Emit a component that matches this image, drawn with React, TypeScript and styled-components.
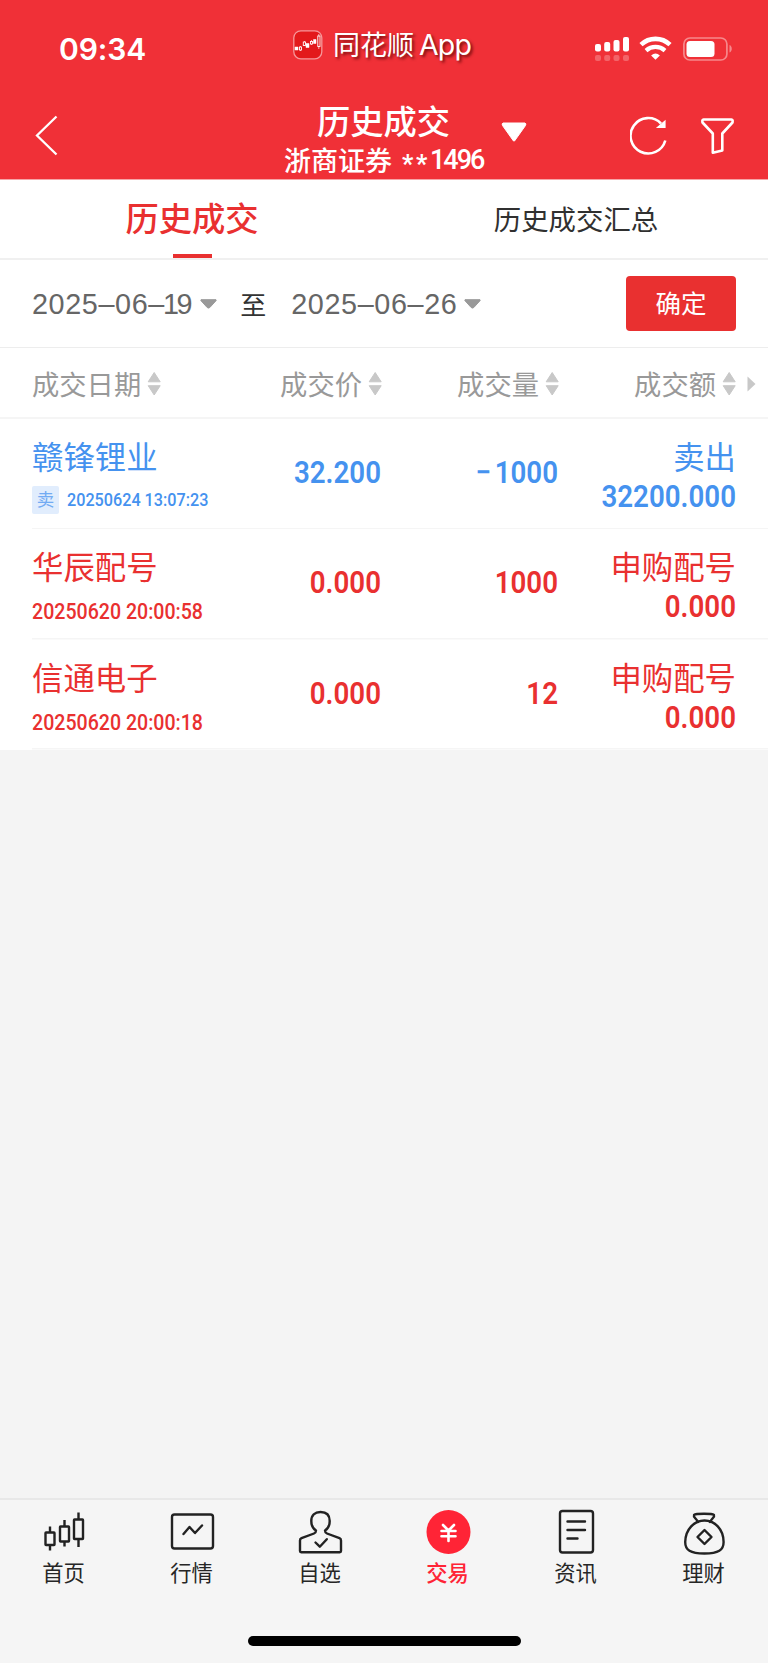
import React from "react";
import styled, { createGlobalStyle } from "styled-components";

const RED = "#e93030";
const BLUE = "#4592ef";

const GlobalStyle = createGlobalStyle`
  * { box-sizing: border-box; }
  body {
    margin: 0;
    background: #f5f5f5;
    font-family: "Noto Sans CJK SC", sans-serif;
  }
`;

const Page = styled.div`
  width: 768px;
  height: 1663px;
  display: flex;
  flex-direction: column;
  background: #f4f4f4;
  white-space: nowrap;
`;

const TopArea = styled.header`
  height: 180px;
  background: #f03037;
  border-bottom: 1px solid #f6a5a7;
  color: #fff;
`;

const StatusBar = styled.div`
  height: 98px;
  display: grid;
  grid-template-columns: 293px 1fr 173px;
`;

const Clock = styled.div`
  padding: 30px 0 0 59px;
  font: 600 30px/38px Inter, sans-serif;
  letter-spacing: -0.1px;
`;

const AppMark = styled.div`
  display: flex;
  align-items: flex-start;
  gap: 10px;
  padding-top: 30px;
`;

const AppName = styled.span`
  margin-top: -1px;
  font-size: 27px;
  line-height: 30px;
  text-shadow: 2px 2px 3px rgba(80, 0, 0, 0.75);
  & > b {
    margin-left: 5px;
    font: 400 28.5px/30px Inter, sans-serif;
    letter-spacing: -0.8px;
  }
`;

const Indicators = styled.div`
  display: flex;
  align-items: flex-start;
  padding-top: 36px;
`;

const NavBar = styled.div`
  height: 81px;
  display: grid;
  grid-template-columns: 284px 200px 146px 71px 1fr;
`;

const NavCell = styled.div<{ $top: number; $left?: number }>`
  padding: ${(p) => p.$top}px 0 0 ${(p) => p.$left ?? 0}px;
  line-height: 0;
`;

const Titles = styled.div`
  display: flex;
  flex-direction: column;
  align-items: center;
`;

const Title = styled.h1`
  margin: 4px 1px 0 0;
  font-size: 33.3px;
  line-height: 36px;
  font-weight: 500;
`;

const Account = styled.div`
  display: flex;
  margin: 5px 1px 0 0;
  font-size: 27px;
  line-height: 34px;
  font-weight: 500;
`;

const Mask = styled.span`
  padding: 4px 0 0 10px;
  font: 700 25px/35px Roboto, sans-serif;
  letter-spacing: 2.6px;
`;

const AccountNo = styled.span`
  width: 53px;
  font: 500 27px/35px Roboto, sans-serif;
  letter-spacing: -2px;
`;

const Tabs = styled.nav`
  height: 80px;
  display: grid;
  grid-template-columns: 1fr 1fr;
  background: #fff;
  border-bottom: 2px solid #f0f0f0;
`;

const Tab = styled.div<{ $active?: boolean }>`
  display: flex;
  flex-direction: column;
  align-items: center;
  justify-content: space-between;
  color: ${(p) => (p.$active ? RED : "#303030")};
  font-size: ${(p) => (p.$active ? 33.3 : 27.4)}px;
  font-weight: ${(p) => (p.$active ? 500 : 400)};
  line-height: ${(p) => (p.$active ? 74 : 76)}px;
  &::after {
    content: "";
    width: 39px;
    height: 4px;
    margin-top: -2px;
    background: ${(p) => (p.$active ? RED : "transparent")};
  }
`;

const RangeBar = styled.div`
  height: 88px;
  display: flex;
  align-items: center;
  padding: 0 32px;
  background: #fff;
  border-bottom: 1px solid #ededed;
`;

const DateField = styled.div`
  display: flex;
  align-items: center;
  gap: 7px;
  color: #666;
  font: 400 28.8px/40px "Liberation Sans", sans-serif;
  letter-spacing: 0.6px;
`;

const NarrowDigit = styled.span`
  margin: 0 -3px 0 -2px;
`;

const To = styled.span`
  margin: 0 25px 0 23px;
  color: #333;
  font-size: 26px;
  line-height: 40px;
`;

const Confirm = styled.button`
  width: 110px;
  height: 55px;
  margin-left: auto;
  padding: 0 0 3px;
  border: 0;
  border-radius: 4px;
  background: ${RED};
  color: #fff;
  font: 400 25.5px/50px "Noto Sans CJK SC", sans-serif;
`;

const columns = `
  display: grid;
  grid-template-columns: 205px 144px 177px 177px;
  padding-left: 33px;
`;

const HeadRow = styled.div`
  ${columns}
  height: 71px;
  position: relative;
  background: #fff;
  border-bottom: 2px solid #f5f5f5;
`;

const HeadCell = styled.div<{ $first?: boolean }>`
  display: flex;
  align-items: center;
  justify-content: ${(p) => (p.$first ? "flex-start" : "flex-end")};
  gap: 6px;
  margin-left: ${(p) => (p.$first ? -1 : 0)}px;
  color: #999;
  font-size: 27.3px;
  line-height: 66px;
  & > svg { margin-top: 3px; }
`;

const MoreArrow = styled.svg`
  position: absolute;
  right: 12px;
  top: 28px;
`;

const TradeList = styled.main`
  background: #fff;
`;

const TradeRow = styled.div<{ $color: string }>`
  ${columns}
  height: 110.3px;
  color: ${(p) => p.$color};
  background: linear-gradient(#f5f5f5, #f5f5f5) 32px 100% / 100% 1.5px no-repeat;
`;

const NameCell = styled.div`
  padding-top: 17px;
`;

const Name = styled.div`
  margin-left: -1px;
  font-size: 31.4px;
  line-height: 40px;
`;

const Stamp = styled.div<{ $small: boolean }>`
  display: flex;
  align-items: center;
  gap: 8px;
  height: 28px;
  margin: ${(p) => (p.$small ? "10px 0 0 -1px" : "12px 0 0 -1px")};
  font: 500 ${(p) => (p.$small ? 18.2 : 22)}px/28px Roboto, sans-serif;
`;

const Time = styled.span`
  transform: scaleX(0.89);
  transform-origin: left;
`;

const Badge = styled.span`
  width: 27px;
  height: 28px;
  border-radius: 2px;
  background: #e1edfd;
  color: #72abf3;
  text-align: center;
  font: 400 17.5px/26px "Noto Sans CJK SC", sans-serif;
`;

const NumberText = styled.div`
  font: 600 31.5px/36px Roboto, sans-serif;
  text-align: right;
  transform: scaleX(0.88);
  transform-origin: right;
`;

const Minus = styled.span`
  margin-right: 4px;
`;

const MidCell = styled.div`
  padding: 36px 1px 0 0;
`;

const AmountCell = styled.div`
  padding-top: 17px;
  text-align: right;
`;

const Kind = styled.div`
  font-size: 31.4px;
  line-height: 40px;
  margin-bottom: 3px;
`;

const Footer = styled.footer`
  margin-top: auto;
  height: 165px;
  display: flex;
  flex-direction: column;
  align-items: center;
  justify-content: space-between;
  padding-bottom: 17px;
  border-top: 2px solid #e8e8e8;
  background: #f5f5f5;
`;

const MenuBar = styled.div`
  align-self: stretch;
  display: grid;
  grid-template-columns: repeat(6, 1fr);
  margin: 0 0.5px 0 -0.5px;
`;

const MenuItem = styled.div<{ $active?: boolean }>`
  display: flex;
  flex-direction: column;
  align-items: center;
  padding-top: 6px;
  color: ${(p) => (p.$active ? "#ff2436" : "#262626")};
  font-size: 21.3px;
  font-weight: ${(p) => (p.$active ? 500 : 400)};
  line-height: 30px;
  & > svg { margin-bottom: 1px; }
`;

const HomeIndicator = styled.div`
  width: 273px;
  height: 10px;
  border-radius: 5px;
  background: #000;
`;

const AppIcon = () => (
  <svg width="30" height="30" viewBox="0 0 30 30" fill="none">
    <rect x="0.8" y="0.8" width="28" height="28" rx="7" fill="#e3191b" stroke="#f6979a" strokeWidth="1.3" />
    <path d="M7.5 16v5M11.500 11v5M18.500 10v5M25.800 4v15" stroke="#ffd4d4" strokeWidth="0.8" />
    <path d="M2 17h3v3H2zM13 13.500h3v4h-3zM20.500 9.500H23v4h-2.500z" fill="#fff" stroke="#fff" strokeWidth="0.5" />
    <g fill="#e3191b" stroke="#fff" strokeWidth="0.9">
      <rect x="6.500" y="17" width="2" height="3" />
      <rect x="10.300" y="12" width="2.200" height="3.500" />
      <rect x="17.500" y="11.500" width="2" height="2.500" />
      <rect x="24.800" y="6" width="2.200" height="10.500" />
    </g>
  </svg>
);

const Signal = () => (
  <svg width="35" height="26" viewBox="0 0 35 26" fill="#fff">
    <rect x="0" y="8" width="6" height="7.500" rx="2" />
    <rect x="9.200" y="6" width="6" height="9.500" rx="2" />
    <rect x="18.500" y="4" width="6" height="11.500" rx="2" />
    <rect x="28" y="1" width="6" height="14.500" rx="2" />
    <g opacity="0.25">
      <rect x="0" y="19" width="6" height="6" rx="2" />
      <rect x="9.200" y="19" width="6" height="6" rx="2" />
      <rect x="18.500" y="19" width="6" height="6" rx="2" />
      <rect x="28" y="19" width="6" height="6" rx="2" />
    </g>
  </svg>
);

const Wifi = () => (
  <svg width="33" height="25" viewBox="0 0 33 25" fill="none" stroke="#fff">
    <path d="M2 8.700C10.200.9 22.800.9 31 8.700" strokeWidth="4.600" />
    <path d="M7 14.600c5.500-4.900 13.500-4.900 19 0" strokeWidth="4.200" />
    <path d="M16.500 23.700l-4.400-4.300q4.400-3.600 8.800 0z" fill="#fff" stroke="none" />
  </svg>
);

const Battery = () => (
  <svg width="50" height="26" viewBox="0 0 50 26" fill="none">
    <rect x="0.900" y="2" width="43" height="22" rx="6" stroke="#f6888c" strokeWidth="1.700" />
    <rect x="3.500" y="5" width="28" height="16" rx="3.500" fill="#fff" />
    <path d="M46.500 9c3 1 3 6.500 0 7.500z" fill="#f6888c" />
  </svg>
);

const SortIcon = () => (
  <svg width="14" height="26" viewBox="0 0 14 26" fill="#c8c8c8" stroke="#c8c8c8" strokeLinejoin="round">
    <path d="M7.200 1.500L13.200 10.800h-12zM7.200 24L13.200 14.700h-12z" />
  </svg>
);

const DateCaret = () => (
  <svg width="17" height="10" viewBox="0 0 17 10" fill="#999" stroke="#999" strokeLinejoin="round">
    <path d="M1 .7h15q.5.3 0 1L9.800 8.500q-1.300 1.200-2.600 0L1 1.700q-.5-.7 0-1z" />
  </svg>
);

const iconProps = {
  width: 48,
  height: 50,
  viewBox: "0 0 48 50",
  fill: "none",
  stroke: "#222",
  strokeWidth: 2.4,
  strokeLinecap: "round" as const,
  strokeLinejoin: "round" as const,
};

const CandlesIcon = () => (
  <svg {...iconProps} strokeLinecap="butt">
    <rect x="5.500" y="26.500" width="9" height="12.500" rx="0.5" />
    <rect x="20" y="20.500" width="9" height="15" rx="0.5" />
    <rect x="34" y="13.500" width="9" height="19.500" rx="0.5" />
    <path d="M10 20.500v6M10 39v5.500M24.500 14V20.500M24.500 35.500v5M38.500 6.500v7M38.500 33v8" />
  </svg>
);

const QuoteIcon = () => (
  <svg {...iconProps}>
    <rect x="4" y="8.500" width="41" height="34" rx="2.500" />
    <path d="M15.500 28L21.500 21l5.500 6 7-7.500" />
  </svg>
);

const WatchIcon = () => (
  <svg {...iconProps}>
    <path d="M20 24.500c-2.500-1.500-4.700-5-4.700-9.500C15.300 9 18.800 6 24.500 6s9.200 3 9.200 9c0 4.500-2.200 8-4.700 9.500 0 2 .5 2.400 2 3l12.500 4.700q1.500.6 1.500 2.200V45q0 1.200-1.200 1.200H5.200Q4 46.200 4 45V34.400q0-1.600 1.500-2.200L18 27.500c1.500-.6 2-1 2-3z" />
    <path d="M19.500 36.500l4.300 4.200 7-7.500" />
  </svg>
);

const TradeIcon = () => (
  <svg {...iconProps} stroke="#fff">
    <circle cx="24.500" cy="26" r="22" fill="#ff2436" stroke="none" />
    <path d="M19 19l5.500 5.500L30 19M17.500 25h14M17.500 30.200h14M24.500 24.500V35" strokeWidth="2.600" />
  </svg>
);

const NewsIcon = () => (
  <svg {...iconProps}>
    <rect x="8" y="5" width="33" height="41.500" rx="2.500" />
    <path d="M15.500 15.500H33M15.500 24H33M15.500 32.500h10" />
  </svg>
);

const WealthIcon = () => (
  <svg {...iconProps}>
    <path d="M18 16C16 12 13 11 14 9c2-1.600 18-1.600 20 0 1 2-2 3-4 7" />
    <path d="M24.500 14.500C14.500 14.500 5.500 23 5.200 36c0 8 5 11.500 19.200 11.500S43.600 44 43.600 36C43.500 23 34.500 14.500 24.500 14.500z" />
    <path d="M24.500 24l7 7-7 7-7-7z" />
  </svg>
);

const trades = [
  { name: "赣锋锂业", badge: "卖", time: "20250624 13:07:23", price: "32.200", negative: true, qty: "1000", kind: "卖出", amount: "32200.000", color: BLUE },
  { name: "华辰配号", time: "20250620 20:00:58", price: "0.000", qty: "1000", kind: "申购配号", amount: "0.000", color: RED },
  { name: "信通电子", time: "20250620 20:00:18", price: "0.000", qty: "12", kind: "申购配号", amount: "0.000", color: RED },
];

const menu = [
  { label: "首页", icon: <CandlesIcon /> },
  { label: "行情", icon: <QuoteIcon /> },
  { label: "自选", icon: <WatchIcon /> },
  { label: "交易", icon: <TradeIcon />, active: true },
  { label: "资讯", icon: <NewsIcon /> },
  { label: "理财", icon: <WealthIcon /> },
];

export default function App() {
  return (
    <Page>
      <GlobalStyle />
      <TopArea>
        <StatusBar>
          <Clock>09:34</Clock>
          <AppMark>
            <AppIcon />
            <AppName>同花顺<b>App</b></AppName>
          </AppMark>
          <Indicators>
            <NavCell $top={0}><Signal /></NavCell>
            <NavCell $top={0} $left={9}><Wifi /></NavCell>
            <NavCell $top={0} $left={11}><Battery /></NavCell>
          </Indicators>
        </StatusBar>
        <NavBar>
          <NavCell $top={17} $left={35}>
            <svg width="24" height="42" viewBox="0 0 24 42" fill="none" stroke="#fff" strokeWidth="2.300">
              <path d="M21.500 1.500L2 20.500l19.500 19" />
            </svg>
          </NavCell>
          <Titles>
            <Title>历史成交</Title>
            <Account>浙商证券<Mask>**</Mask><AccountNo>1496</AccountNo></Account>
          </Titles>
          <NavCell $top={24} $left={17}>
            <svg width="26" height="21" viewBox="0 0 26 21" fill="#fff" stroke="#fff" strokeLinejoin="round">
              <path d="M2 1h22q1.500.5.5 2.500L13.500 19h-1L1.500 3.500Q.5 1.500 2 1z" />
            </svg>
          </NavCell>
          <NavCell $top={18}>
            <svg width="40" height="42" viewBox="0 0 40 42" fill="none" stroke="#fff" strokeWidth="2.600">
              <path d="M35.300 24.500A17.700 17.700 0 1 1 31 7.500" />
              <path d="M35 5v6.500h-7.500z" fill="#fff" strokeWidth="1.200" />
            </svg>
          </NavCell>
          <NavCell $top={20}>
            <svg width="34" height="38" viewBox="0 0 34 38" fill="none" stroke="#fff" strokeWidth="2.600" strokeLinejoin="round">
              <path d="M2.500 1.500h28q1.500 0 1 3L21.300 15.500V32.500l-9.500 2.200V15.500L1.500 4.500q-.5-3 1-3z" />
            </svg>
          </NavCell>
        </NavBar>
      </TopArea>
      <Tabs>
        <Tab $active>历史成交</Tab>
        <Tab>历史成交汇总</Tab>
      </Tabs>
      <RangeBar>
        <DateField>
          <span>2025–06–<NarrowDigit>1</NarrowDigit>9</span>
          <DateCaret />
        </DateField>
        <To>至</To>
        <DateField>
          <span>2025–06–26</span>
          <DateCaret />
        </DateField>
        <Confirm>确定</Confirm>
      </RangeBar>
      <HeadRow>
        {["成交日期", "成交价", "成交量", "成交额"].map((label, i) => (
          <HeadCell key={label} $first={i === 0}>{label}<SortIcon /></HeadCell>
        ))}
        <MoreArrow width="9" height="16" viewBox="0 0 9 16" fill="#c8c8c8">
          <path d="M0.500 0.500L8.500 8l-8 7.500z" />
        </MoreArrow>
      </HeadRow>
      <TradeList>
        {trades.map((t) => (
          <TradeRow key={t.name} $color={t.color}>
            <NameCell>
              <Name>{t.name}</Name>
              <Stamp $small={!!t.badge}>
                {t.badge && <Badge>{t.badge}</Badge>}
                <Time>{t.time}</Time>
              </Stamp>
            </NameCell>
            <MidCell><NumberText>{t.price}</NumberText></MidCell>
            <MidCell><NumberText>{t.negative && <Minus>−</Minus>}{t.qty}</NumberText></MidCell>
            <AmountCell>
              <Kind>{t.kind}</Kind>
              <NumberText>{t.amount}</NumberText>
            </AmountCell>
          </TradeRow>
        ))}
      </TradeList>
      <Footer>
        <MenuBar>
          {menu.map((m) => (
            <MenuItem key={m.label} $active={m.active}>{m.icon}{m.label}</MenuItem>
          ))}
        </MenuBar>
        <HomeIndicator />
      </Footer>
    </Page>
  );
}
